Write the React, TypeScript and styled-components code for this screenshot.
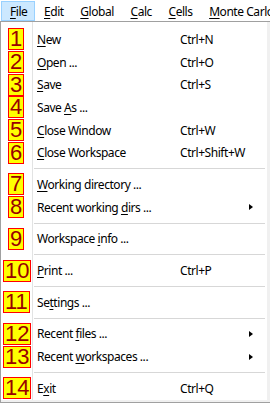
import { Fragment } from 'react';
import styled, { createGlobalStyle } from 'styled-components';

const GlobalStyle = createGlobalStyle`
  html, body {
    margin: 0;
    padding: 0;
    background: #ffffff;
  }
  body {
    font-family: 'Noto Sans', 'Open Sans', sans-serif;
    font-size: 12px;
    letter-spacing: -0.45px;
    color: #000000;
  }
`;

const Page = styled.div`
  width: 270px;
  height: 403px;
  overflow: hidden;
  background: #ffffff;
`;

const MenuBar = styled.div`
  display: flex;
  height: 21px;
  padding-left: 1px;
  white-space: nowrap;
`;

const BarItem = styled.div<{ $open?: boolean }>`
  display: flex;
  align-items: center;
  height: 18px;
  margin-top: 1px;
  padding: 0 6.6px 0 8px;
  border: 1px solid ${(p) => (p.$open ? '#99d1ff' : 'transparent')};
  background: ${(p) => (p.$open ? '#cce8ff' : 'transparent')};
`;

const Dropdown = styled.div`
  width: 266px;
  border: 1px solid #a0a0a0;
  background: #f0f0f0;
  padding: 0 3px 2px 0;
  box-shadow: 1px 1px 0 #ffffff, 2px 2px 0 #c4c4c4;
`;

const Panel = styled.div`
  padding: 6px 0 0;
  background: linear-gradient(
    to right,
    #ffffff 31px,
    #e2e3e3 31px,
    #e2e3e3 32px,
    #ffffff 32px
  );
`;

const Row = styled.div`
  display: flex;
  align-items: center;
  height: 22.7px;
  white-space: nowrap;
`;

const Gutter = styled.div<{ $wide: boolean }>`
  flex: none;
  width: 32px;
  display: flex;
  padding-left: ${(p) => (p.$wide ? '2px' : '7px')};
  box-sizing: border-box;
`;

const Badge = styled.div`
  height: 20px;
  padding: 0 1px;
  border: 1px solid #ff0000;
  background: #ffff00;
  color: #990000;
  font-family: 'Liberation Sans', Arial, sans-serif;
  font-size: 22px;
  letter-spacing: 0;
  line-height: 20px;
`;

const Label = styled.div`
  flex: none;
  width: 143px;
  padding-left: 4px;
`;

const Shortcut = styled.div`
  flex: 1;
`;

const Arrow = styled.div`
  flex: none;
  width: 18px;
  display: flex;
  align-items: center;
`;

const Triangle = styled.span`
  width: 0;
  height: 0;
  border-top: 3.5px solid transparent;
  border-bottom: 3.5px solid transparent;
  border-left: 4px solid #000000;
`;

const Separator = styled.div`
  height: 9px;
  display: flex;
  align-items: center;
  padding: 0 2px 0 33px;
  &::after {
    content: '';
    flex: 1;
    height: 1px;
    background: #d7d7d7;
  }
`;

const Key = styled.span`
  text-decoration: underline;
  text-underline-offset: 2px;
`;

// "&" marks the access key, as in a Windows menu resource
const Mnemonic = ({ text }: { text: string }) => {
  const i = text.indexOf('&');
  if (i < 0) return <>{text}</>;
  return (
    <>
      {text.slice(0, i)}
      <Key>{text[i + 1]}</Key>
      {text.slice(i + 2)}
    </>
  );
};

type Entry = { label: string; shortcut?: string; sub?: boolean } | 'sep';

const ENTRIES: Entry[] = [
  { label: '&New', shortcut: 'Ctrl+N' },
  { label: '&Open ...', shortcut: 'Ctrl+O' },
  { label: '&Save', shortcut: 'Ctrl+S' },
  { label: 'Save &As ...' },
  { label: '&Close Window', shortcut: 'Ctrl+W' },
  { label: '&Close Workspace', shortcut: 'Ctrl+Shift+W' },
  'sep',
  { label: '&Working directory ...' },
  { label: 'Recent working &dirs ...', sub: true },
  'sep',
  { label: 'Workspace &info ...' },
  'sep',
  { label: '&Print ...', shortcut: 'Ctrl+P' },
  'sep',
  { label: 'Se&ttings ...' },
  'sep',
  { label: 'Recent &files ...', sub: true },
  { label: 'Recent &workspaces ...', sub: true },
  'sep',
  { label: 'E&xit', shortcut: 'Ctrl+Q' },
];

const BAR = ['&File', '&Edit', '&Global', '&Calc', '&Cells', '&Monte Carlo'];

const App = () => {
  let n = 0;
  return (
    <Page>
      <GlobalStyle />
      <MenuBar>
        {BAR.map((b, i) => (
          <BarItem key={b} $open={i === 0}>
            <Mnemonic text={b} />
          </BarItem>
        ))}
      </MenuBar>
      <Dropdown>
        <Panel>
          {ENTRIES.map((e, i) => {
            if (e === 'sep') return <Separator key={i} />;
            n += 1;
            return (
              <Fragment key={i}>
                <Row>
                  <Gutter $wide={n > 9}>
                    <Badge>{n}</Badge>
                  </Gutter>
                  <Label>
                    <Mnemonic text={e.label} />
                  </Label>
                  <Shortcut>{e.shortcut}</Shortcut>
                  <Arrow>{e.sub && <Triangle />}</Arrow>
                </Row>
              </Fragment>
            );
          })}
        </Panel>
      </Dropdown>
    </Page>
  );
};

export default App;
